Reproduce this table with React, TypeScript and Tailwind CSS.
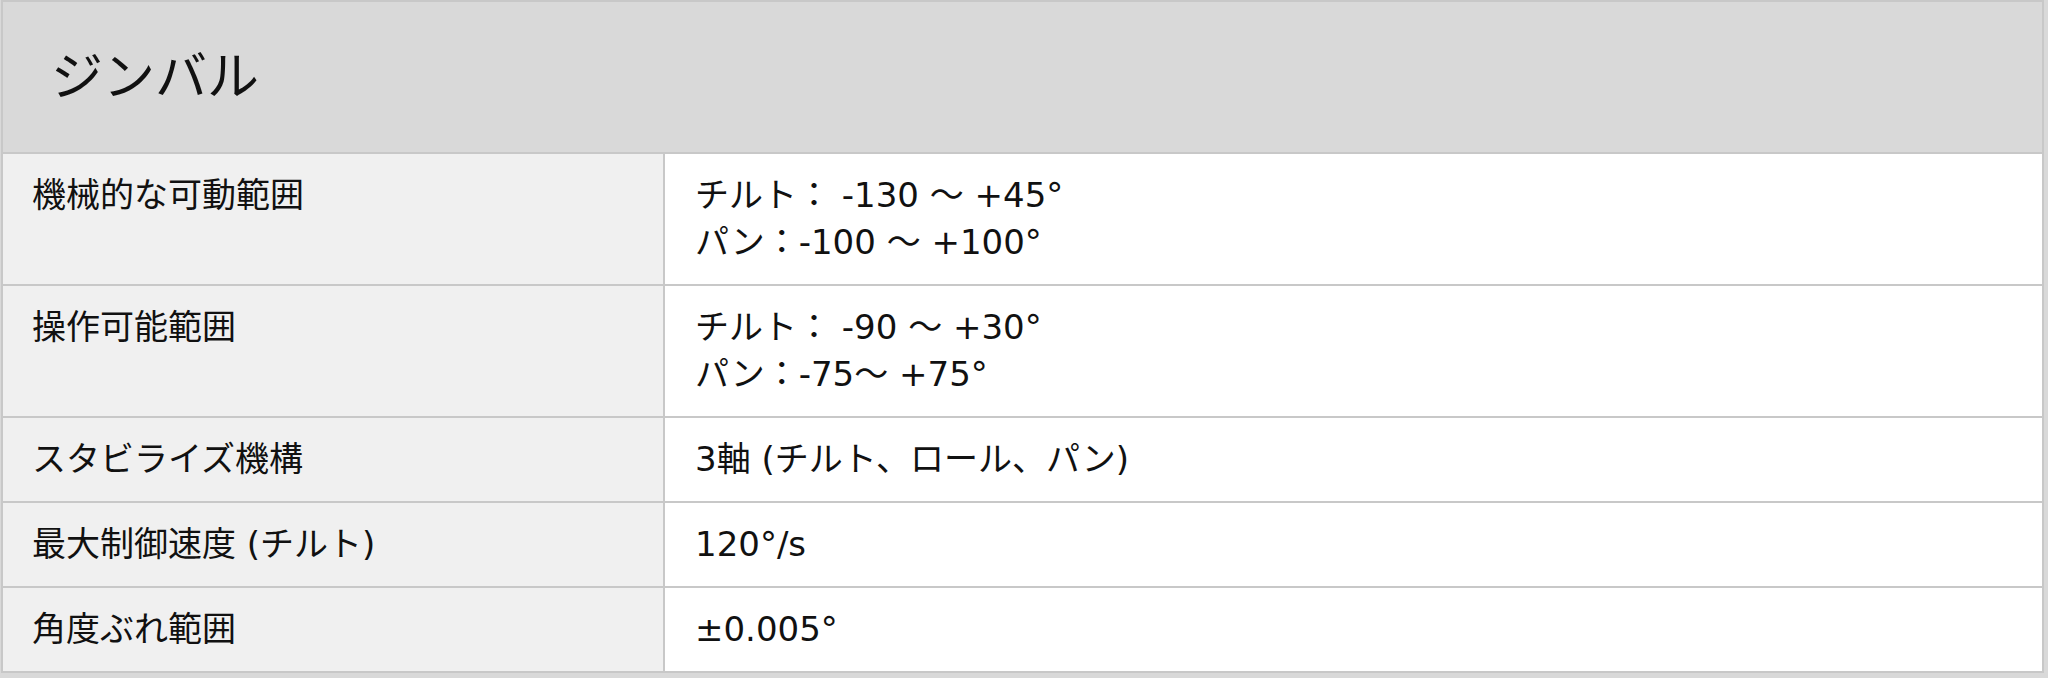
import React from 'react';

const rows: { label: string; values: string[] }[] = [
  { label: '機械的な可動範囲', values: ['チルト： -130 ～ +45°', 'パン：-100 ～ +100°'] },
  { label: '操作可能範囲', values: ['チルト： -90 ～ +30°', 'パン：-75～ +75°'] },
  { label: 'スタビライズ機構', values: ['3軸 (チルト、ロール、パン)'] },
  { label: '最大制御速度 (チルト)', values: ['120°/s'] },
  { label: '角度ぶれ範囲', values: ['±0.005°'] },
];

export default function App() {
  return (
    <div
      className="w-[2048px] h-[678px] overflow-hidden bg-[#d9d9d9] text-[#111111]"
      style={{ fontFamily: '"DejaVu Sans", "Noto Sans CJK JP", sans-serif' }}
    >
      <div className="ml-[1px] w-[2043px] border-t-2 border-x-2 border-[#c8c8c8]">
        {/* 見出し */}
        <div className="h-[152px] bg-[#d9d9d9] border-b-2 border-[#c8c8c8] flex items-center pl-[48px]">
          <h2 className="text-[52px] leading-none font-normal">ジンバル</h2>
        </div>

        {/* 仕様の行 */}
        {rows.map((row) => (
          <div key={row.label} className="grid grid-cols-[662px_1fr] border-b-2 border-[#c8c8c8]">
            <div className="bg-[#f0f0f0] border-r-2 border-[#c8c8c8] px-[29px] py-[18px] text-[34px] leading-[47px]">
              {row.label}
            </div>
            <div className="bg-white px-[30px] py-[18px] text-[34px] leading-[47px]">
              {row.values.map((v) => (
                <div key={v}>{v}</div>
              ))}
            </div>
          </div>
        ))}
      </div>
    </div>
  );
}
